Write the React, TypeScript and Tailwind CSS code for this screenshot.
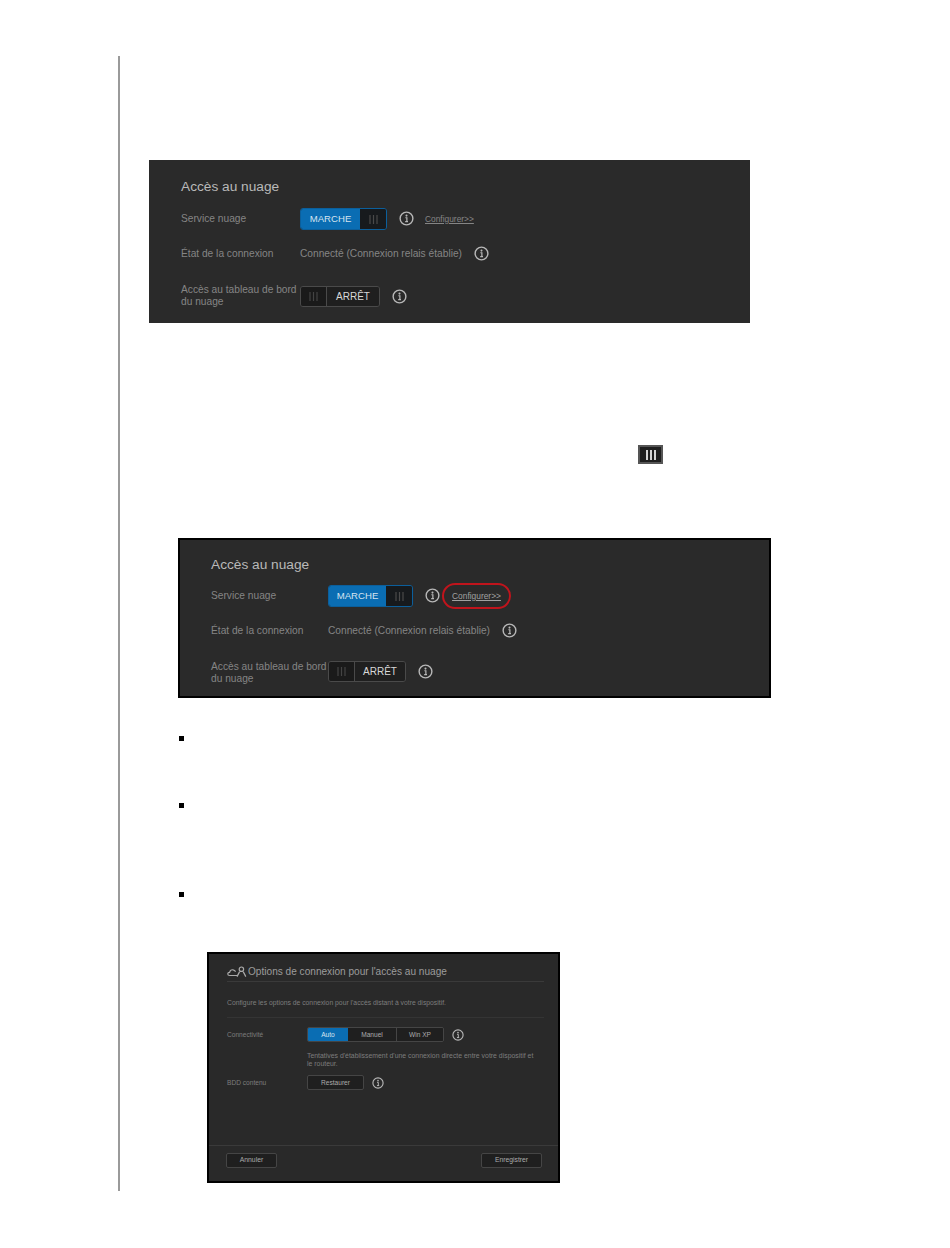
import React from 'react';

const font = "font-['Liberation_Sans',Arial,sans-serif]";

function InfoIcon({ size = 15, className = '' }: { size?: number; className?: string }) {
  return (
    <svg width={size} height={size} viewBox="0 0 16 16" fill="none" className={`shrink-0 ${className}`}>
      <circle cx="8" cy="8" r="6.8" stroke="#b8b8b8" strokeWidth="1.5" />
      <circle cx="8" cy="4.9" r="1.1" fill="#b8b8b8" />
      <path d="M6.8 7.2H8.4V11.2M6.6 11.4H9.6" stroke="#b8b8b8" strokeWidth="1.3" />
    </svg>
  );
}

function Grip({ color = '#4a4a4a' }: { color?: string }) {
  return (
    <svg width="9" height="9" viewBox="0 0 9 9" className="shrink-0">
      <path d="M1 0V9M4.5 0V9M8 0V9" stroke={color} strokeWidth="1.2" />
    </svg>
  );
}

function ToggleOn({ width }: { width: string }) {
  return (
    <div className={`flex h-[22px] ${width} shrink-0 overflow-hidden rounded-[3px] border border-[#0b5f9c]`}>
      <div className="flex flex-1 items-center justify-center bg-[#0a6db3] text-[9.6px] text-[#d5e4f0]">MARCHE</div>
      <div className="flex w-[26px] items-center justify-center bg-[#171a1d]">
        <Grip />
      </div>
    </div>
  );
}

function ToggleOff({ width, className = '' }: { width: string; className?: string }) {
  return (
    <div className={`flex h-[21px] ${width} shrink-0 overflow-hidden rounded-[3px] border border-[#4a4a4a] ${className}`}>
      <div className="flex w-[26px] items-center justify-center border-r border-[#4a4a4a] bg-[#1a1a1a]">
        <Grip color="#444444" />
      </div>
      <div className="flex flex-1 items-center justify-center bg-[#1f1f1f] text-[10px] text-[#d8d8d8]">ARRÊT</div>
    </div>
  );
}

function CloudPanel({ marked }: { marked?: boolean }) {
  const labelW = marked ? 'w-[117px]' : 'w-[119px]';
  return (
    <div className="flex h-full flex-col">
      <div className="mt-[1px] text-[13.7px] leading-[18px] text-[#b9b9b9]">Accès au nuage</div>
      <div className={`flex h-[22px] items-center ${marked ? 'mt-[11px]' : 'mt-[12px]'}`}>
        <div className={`${labelW} shrink-0 text-[10.2px] whitespace-nowrap text-[#858585]`}>Service nuage</div>
        <ToggleOn width={marked ? 'w-[85px]' : 'w-[87px]'} />
        <InfoIcon className="mb-[1px] ml-[12px]" />
        {marked ? (
          <span className="ml-[2px] flex h-[26px] w-[69px] shrink-0 items-center justify-center rounded-full border-2 border-[#c0141c] text-[8.4px] text-[#a0a0a0] underline">
            Configurer&gt;&gt;
          </span>
        ) : (
          <span className="ml-[11px] text-[8.4px] text-[#858585] underline">Configurer&gt;&gt;</span>
        )}
      </div>
      <div className="mt-[16px] flex h-[16px] items-center">
        <div className={`${labelW} shrink-0 text-[10.2px] whitespace-nowrap text-[#858585]`}>État de la connexion</div>
        <div className="text-[10.2px] whitespace-nowrap text-[#858585]">Connecté (Connexion relais établie)</div>
        <InfoIcon className="mb-[1px] ml-[12px]" />
      </div>
      <div className={`flex items-center ${marked ? 'mt-[22px]' : 'mt-[22px]'}`}>
        <div className={`${labelW} shrink-0 text-[10.2px] leading-[12px] whitespace-nowrap text-[#858585]`}>
          Accès au tableau de bord
          <br />
          du nuage
        </div>
        <ToggleOff width={marked ? 'w-[78px]' : 'w-[80px]'} className={marked ? 'mb-[3px]' : ''} />
        <InfoIcon className={marked ? 'mb-[3px] ml-[12px]' : 'ml-[12px]'} />
      </div>
    </div>
  );
}

function OptionsPanel() {
  return (
    <div className="flex h-[231px] w-[353px] flex-col border-2 border-black bg-[#292929] text-[#7d7d7d]">
      <div className="flex-1 pt-[9px] pr-[14px] pl-[18px]">
        <div className="flex h-[19px] items-center border-b border-[#3a3a3a] pb-[1px]">
          <svg width="20" height="11" viewBox="0 0 20 11" fill="none" className="shrink-0">
            <path d="M10.5 9.5H2.6C1.4 9.5 0.8 8.8 0.8 8C0.8 7 1.6 6.3 2.6 6.4C3 4.6 4.4 3.6 6 3.8C7.2 4 8 4.6 8.6 5.6" stroke="#aaaaaa" strokeWidth="1.2" />
            <circle cx="14.4" cy="3.2" r="2.2" stroke="#aaaaaa" strokeWidth="1.2" />
            <path d="M10 10.6L12.6 5.6M18.8 10.6L16.2 5.6" stroke="#aaaaaa" strokeWidth="1.2" />
          </svg>
          <span className="ml-[1px] text-[10.1px] whitespace-nowrap text-[#9c9c9c]">Options de connexion pour l'accès au nuage</span>
        </div>
        <div className="flex h-[36px] items-center border-b border-[#343434] pt-[7px] text-[6.8px] whitespace-nowrap">
          Configure les options de connexion pour l'accès distant à votre dispositif.
        </div>
        <div className="mt-[9px] flex h-[15px] items-center">
          <div className="w-[80px] shrink-0 text-[6.6px]">Connectivité</div>
          <div className="flex h-[15px] w-[137px] shrink-0 overflow-hidden rounded-[2px] border border-[#454545] text-[6.6px] text-[#ababab]">
            <div className="flex w-[40px] items-center justify-center bg-[#0a6db3] text-[#d5e4f0]">Auto</div>
            <div className="flex w-[49px] items-center justify-center border-r border-[#454545] bg-[#1f1f1f]">Manuel</div>
            <div className="flex flex-1 items-center justify-center bg-[#1f1f1f]">Win XP</div>
          </div>
          <InfoIcon size={12} className="ml-[8px]" />
        </div>
        <div className="mt-[10px] ml-[80px] text-[6.9px] leading-[8px] whitespace-nowrap">
          Tentatives d'établissement d'une connexion directe entre votre dispositif et
          <br />
          le routeur.
        </div>
        <div className="mt-[7px] flex h-[15px] items-center">
          <div className="w-[80px] shrink-0 text-[6.6px]">BDD contenu</div>
          <div className="flex h-[15px] w-[57px] shrink-0 items-center justify-center rounded-[2px] border border-[#454545] bg-[#1f1f1f] text-[6.6px] text-[#ababab]">
            Restaurer
          </div>
          <InfoIcon size={12} className="ml-[8px]" />
        </div>
      </div>
      <div className="flex h-[36px] items-start justify-between border-t border-[#3a3a3a] pt-[7px] pr-[16px] pl-[17px] text-[6.8px] text-[#ababab]">
        <div className="flex h-[15px] w-[51px] items-center justify-center rounded-[2px] border border-[#454545] bg-[#1f1f1f]">Annuler</div>
        <div className="flex h-[15px] w-[61px] items-center justify-center rounded-[2px] border border-[#454545] bg-[#1f1f1f]">Enregistrer</div>
      </div>
    </div>
  );
}

export default function App() {
  return (
    <div className={`h-[1248px] w-[950px] bg-white pt-[56px] pl-[118px] ${font}`}>
      <div className="flex h-[1135px] flex-col items-start border-l-2 border-[#9a9a9a]">
        <div className="mt-[104px] ml-[29px] h-[163px] w-[601px] bg-[#2a2a2a] pt-[17px] pl-[32px]">
          <CloudPanel />
        </div>

        <div className="mt-[122px] ml-[518px] flex h-[19px] w-[25px] items-center justify-center border-2 border-[#555] bg-[#1e1e1e]">
          <svg width="10" height="10" viewBox="0 0 10 10" className="shrink-0">
            <path d="M1 0V10M5 0V10M9 0V10" stroke="#e8e8e8" strokeWidth="1.8" />
          </svg>
        </div>

        <div className="mt-[74px] ml-[58px] h-[160px] w-[593px] border-2 border-black bg-[#2a2a2a] pt-[15px] pl-[31px]">
          <CloudPanel marked />
        </div>

        <div className="mt-[38px] ml-[59px] h-[5px] w-[5px] bg-black" />
        <div className="mt-[62px] ml-[59px] h-[5px] w-[5px] bg-black" />
        <div className="mt-[84px] ml-[59px] h-[5px] w-[5px] bg-black" />

        <div className="mt-[55px] ml-[87px]">
          <OptionsPanel />
        </div>
      </div>
    </div>
  );
}
